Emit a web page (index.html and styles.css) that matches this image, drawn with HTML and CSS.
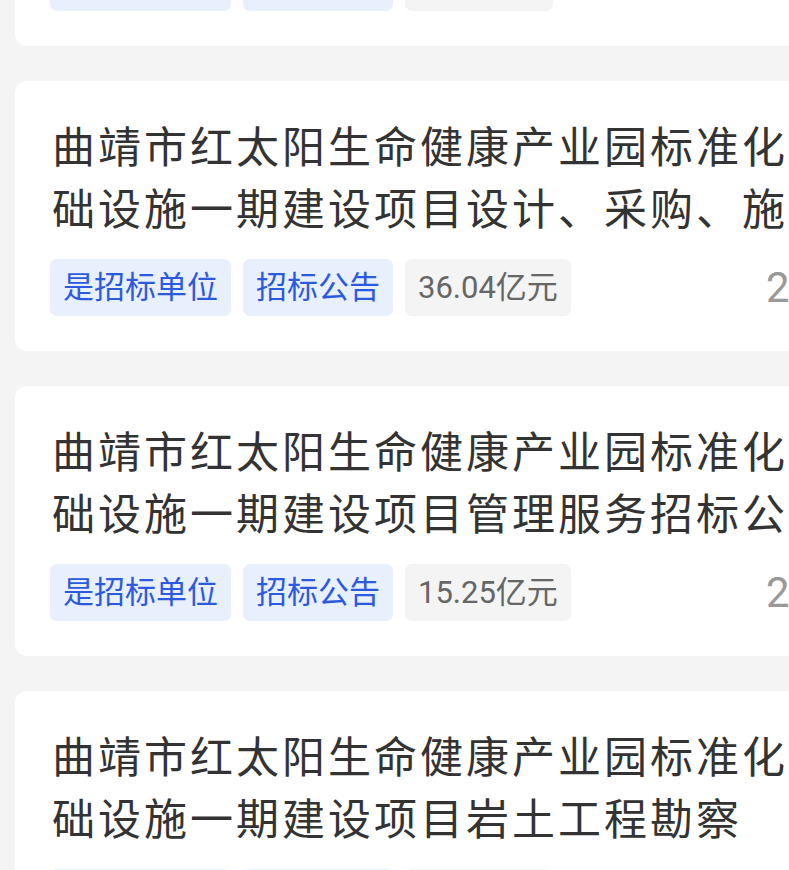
FILE: index.html
```html
<!DOCTYPE html>
<html lang="zh-CN">
<head>
    <meta charset="UTF-8">
    <meta name="viewport" content="width=device-width, initial-scale=1.0">
    <title>招标公告</title>
    <link rel="stylesheet" href="styles.css">
</head>
<body>

    <main class="notice-list">

        <section class="notice-card">
            <h2 class="notice-title">曲靖市红太阳生命健康产业园标准化基础设施一期建设项目勘察设计招标公告</h2>
            <div class="notice-meta">
                <span class="tag tag-blue">是招标单位</span>
                <span class="tag tag-blue">招标公告</span>
                <span class="tag tag-gray">2.16亿元</span>
                <span class="notice-date">2023-09-28</span>
            </div>
        </section>

        <section class="notice-card">
            <h2 class="notice-title">曲靖市红太阳生命健康产业园标准化基础设施一期建设项目设计、采购、施工总承包招标公告</h2>
            <div class="notice-meta">
                <span class="tag tag-blue">是招标单位</span>
                <span class="tag tag-blue">招标公告</span>
                <span class="tag tag-gray">36.04亿元</span>
                <span class="notice-date">2023-09-28</span>
            </div>
        </section>

        <section class="notice-card">
            <h2 class="notice-title">曲靖市红太阳生命健康产业园标准化基础设施一期建设项目管理服务招标公告</h2>
            <div class="notice-meta">
                <span class="tag tag-blue">是招标单位</span>
                <span class="tag tag-blue">招标公告</span>
                <span class="tag tag-gray">15.25亿元</span>
                <span class="notice-date">2023-09-28</span>
            </div>
        </section>

        <section class="notice-card">
            <h2 class="notice-title">曲靖市红太阳生命健康产业园标准化基础设施一期建设项目岩土工程勘察</h2>
            <div class="notice-meta">
                <span class="tag tag-blue">是招标单位</span>
                <span class="tag tag-blue">招标公告</span>
                <span class="tag tag-gray">0.12亿元</span>
                <span class="notice-date">2023-09-28</span>
            </div>
        </section>

    </main>

</body>
</html>
```

FILE: styles.css
```css
html, body {
    margin: 0;
    overflow: hidden;
}

body {
    font-family: Roboto, 'Noto Sans CJK SC', sans-serif;
    background-color: #f4f4f4;
    color: #333;
}

.notice-list {
    width: 1000px;
    margin-top: -224px;
    padding: 0 15px;
    display: flex;
    flex-direction: column;
    gap: 35px;
}

.notice-card {
    background-color: #fff;
    border-radius: 12px;
    height: 270px;
    box-sizing: border-box;
    padding: 36px 37px 34px 35px;
}

.notice-title {
    margin: 0;
    padding-left: 2px;
    max-width: 800px;
    font-size: 43px;
    letter-spacing: 3px;
    font-weight: normal;
    line-height: 62px;
    color: #333;
    display: -webkit-box;
    -webkit-line-clamp: 2;
    -webkit-box-orient: vertical;
    overflow: hidden;
}

.notice-meta {
    margin-top: 18px;
    display: flex;
    align-items: center;
    gap: 12px;
}

.tag {
    height: 57px;
    line-height: 57px;
    padding: 0 13px;
    border-radius: 7px;
    font-size: 31px;
}

.tag-blue {
    background-color: #e8effd;
    color: #2c5ade;
}

.tag-gray {
    background-color: #f4f4f4;
    color: #666;
}

.notice-date {
    margin-left: auto;
    font-size: 42px;
    color: #999;
}
```
